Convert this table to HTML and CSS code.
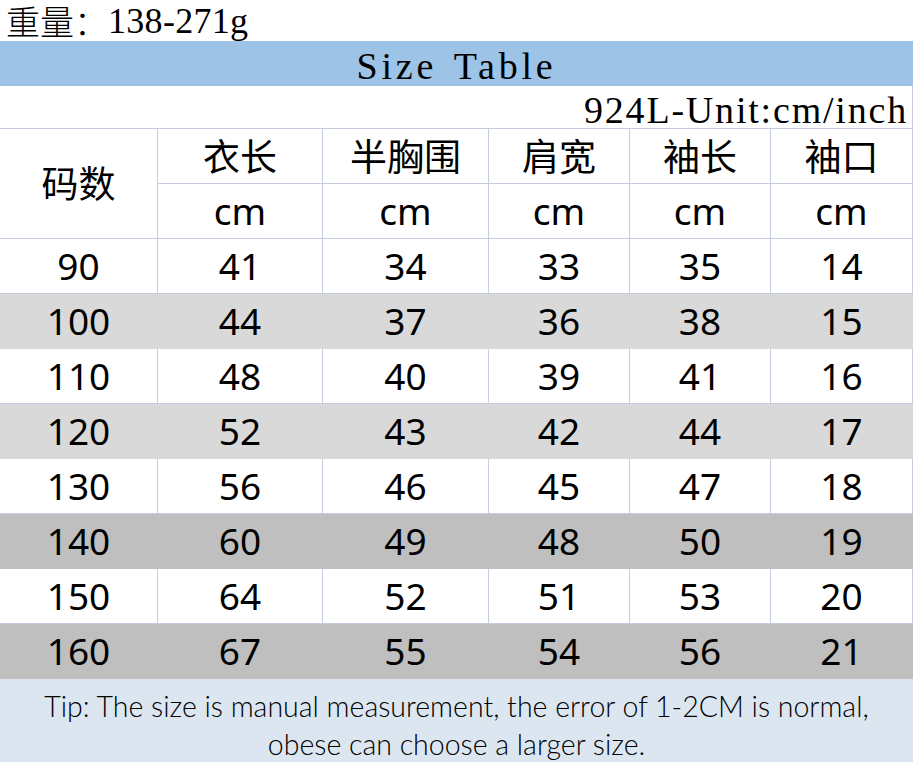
FILE: index.html
```html
<!DOCTYPE html>
<html lang="zh-CN">
<head>
<meta charset="utf-8">
<title>Size Table</title>
<link rel="stylesheet" href="styles.css">
</head>
<body>
<div class="sheet">
  <div class="weight"><span class="cjk">重量：</span><span class="num">138-271g</span></div>
  <div class="title">Size Table</div>
  <div class="unit">924L-Unit:cm/inch</div>
  <div class="grid">
    <div class="cell head-size">码数</div>
    <div class="cell cjk-head">衣长</div>
    <div class="cell cjk-head">半胸围</div>
    <div class="cell cjk-head">肩宽</div>
    <div class="cell cjk-head">袖长</div>
    <div class="cell cjk-head">袖口</div>
    <div class="cell">cm</div>
    <div class="cell">cm</div>
    <div class="cell">cm</div>
    <div class="cell">cm</div>
    <div class="cell">cm</div>

    <div class="cell">90</div><div class="cell">41</div><div class="cell">34</div><div class="cell">33</div><div class="cell">35</div><div class="cell">14</div>
    <div class="cell light">100</div><div class="cell light">44</div><div class="cell light">37</div><div class="cell light">36</div><div class="cell light">38</div><div class="cell light">15</div>
    <div class="cell">110</div><div class="cell">48</div><div class="cell">40</div><div class="cell">39</div><div class="cell">41</div><div class="cell">16</div>
    <div class="cell light">120</div><div class="cell light">52</div><div class="cell light">43</div><div class="cell light">42</div><div class="cell light">44</div><div class="cell light">17</div>
    <div class="cell">130</div><div class="cell">56</div><div class="cell">46</div><div class="cell">45</div><div class="cell">47</div><div class="cell">18</div>
    <div class="cell dark">140</div><div class="cell dark">60</div><div class="cell dark">49</div><div class="cell dark">48</div><div class="cell dark">50</div><div class="cell dark">19</div>
    <div class="cell">150</div><div class="cell">64</div><div class="cell">52</div><div class="cell">51</div><div class="cell">53</div><div class="cell">20</div>
    <div class="cell dark">160</div><div class="cell dark">67</div><div class="cell dark">55</div><div class="cell dark">54</div><div class="cell dark">56</div><div class="cell dark">21</div>
  </div>
  <div class="tip">
    <p>Tip: The size is manual measurement, the error of 1-2CM is normal,</p>
    <p>obese can choose a larger size.</p>
  </div>
</div>
</body>
</html>
```
FILE: styles.css
```css
html, body {
  margin: 0;
  padding: 0;
  background: #ffffff;
}

.sheet {
  width: 913px;
  color: #000;
}

.weight {
  height: 41px;
  padding: 1px 0 0 6px;
  box-sizing: border-box;
  display: flex;
  align-items: center;
  font-size: 34px;
  white-space: nowrap;
}

.weight .cjk {
  display: inline-block;
  font-family: "Noto Sans CJK SC", sans-serif;
  font-weight: 300;
  line-height: 38px;
}

.weight .num {
  display: inline-block;
  font-family: "Liberation Serif", serif;
  font-size: 36px;
  letter-spacing: 0.3px;
  line-height: 38px;
}

.title {
  height: 45px;
  padding-top: 5px;
  box-sizing: border-box;
  background: #9dc3e6;
  display: flex;
  align-items: center;
  justify-content: center;
  font-family: "Liberation Serif", serif;
  font-size: 38px;
  letter-spacing: 3.8px;
  word-spacing: 4px;
}

.unit {
  height: 43px;
  display: flex;
  align-items: center;
  justify-content: flex-end;
  padding: 5px 4px 0 0;
  box-sizing: border-box;
  border-right: 1px solid #c6cddf;
  border-bottom: 1px solid #c6cddf;
  font-family: "Liberation Serif", serif;
  font-size: 38px;
  letter-spacing: 1.8px;
}

.grid {
  display: grid;
  grid-template-columns: 158px 165px 166px 141px 141px 142px;
  grid-auto-rows: 55px;
}

.cell {
  box-sizing: border-box;
  border-right: 1px solid #c6cddf;
  border-bottom: 1px solid #c6cddf;
  display: flex;
  align-items: center;
  justify-content: center;
  padding-bottom: 2px;
  font-family: "Noto Sans", "Open Sans", sans-serif;
  font-size: 37px;
  line-height: 1;
}

.head-size,
.cjk-head {
  font-family: "Noto Sans CJK SC", sans-serif;
  font-size: 37px;
}

.head-size {
  grid-row: span 2;
}

.light {
  background: #d9d9d9;
  border-color: #d9d9d9;
}

.dark {
  background: #bfbfbf;
  border-color: #bfbfbf;
}

.tip {
  height: 83px;
  padding-top: 8px;
  box-sizing: border-box;
  background: #dce6f1;
  display: flex;
  flex-direction: column;
  align-items: center;
  justify-content: center;
  font-family: "Lato", sans-serif;
  font-weight: 300;
  font-size: 28.5px;
  color: #000;
}

.tip p {
  margin: 0;
  line-height: 38px;
}
```
